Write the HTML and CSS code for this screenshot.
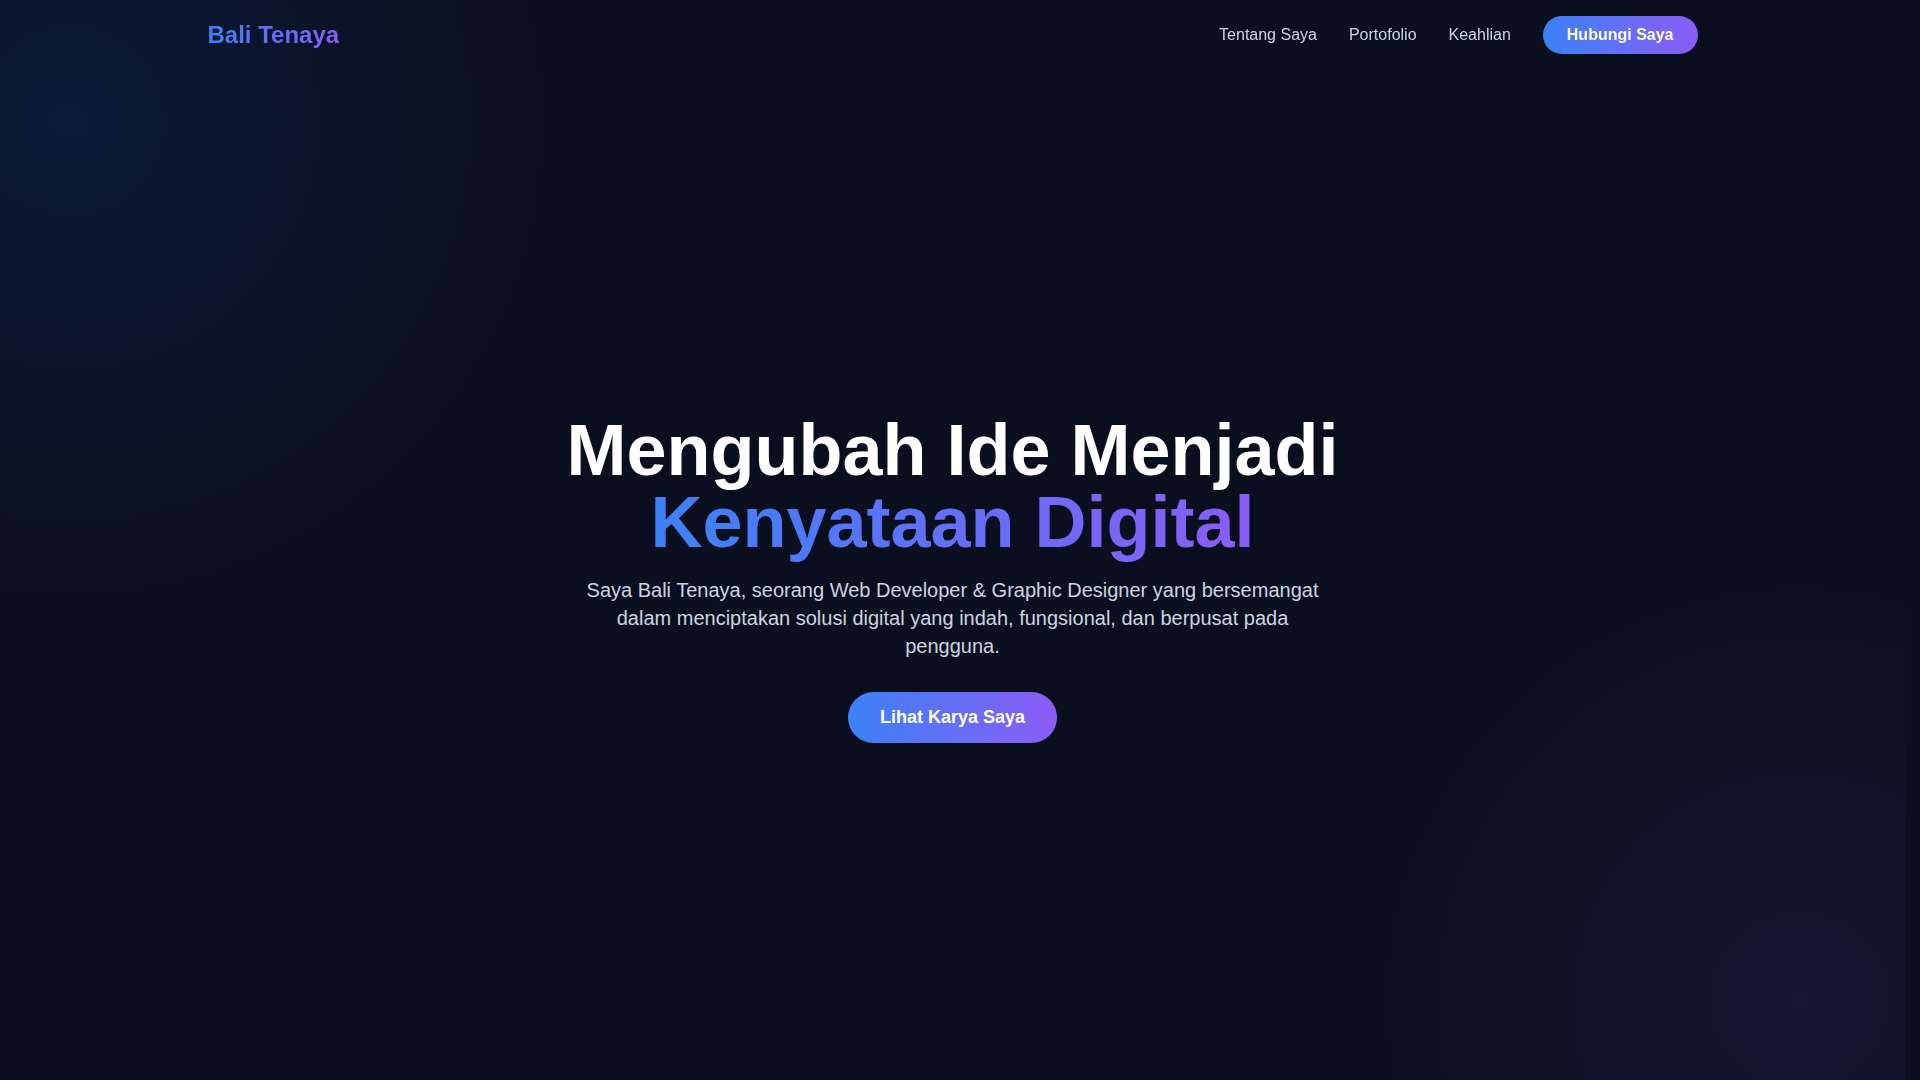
FILE: index.html
```html
<!DOCTYPE html>
<html lang="id">
  <head>
    <meta charset="UTF-8" />
    <meta name="viewport" content="width=device-width, initial-scale=1.0" />
    <title>Bali Tenaya - Web Developer & Graphic Designer</title>
    <link rel="stylesheet" href="styles.css">
  </head>
  <body>
    <!-- Header / Navigation -->
    <header class="header">
      <nav class="nav">
        <a href="#" class="logo">Bali Tenaya</a>
        <div class="nav-links">
          <a href="#tentang">Tentang Saya</a>
          <a href="#portofolio">Portofolio</a>
          <a href="#keahlian">Keahlian</a>
          <a href="#kontak" class="btn btn-nav">Hubungi Saya</a>
        </div>
      </nav>
    </header>

    <!-- Hero Section -->
    <section class="hero">
      <div class="hero-content">
        <h1>
          Mengubah Ide Menjadi<br />
          <span class="gradient-text">Kenyataan Digital</span>
        </h1>
        <p>
          Saya Bali Tenaya, seorang Web Developer &amp; Graphic Designer yang
          bersemangat dalam menciptakan solusi digital yang indah, fungsional,
          dan berpusat pada pengguna.
        </p>
        <a href="#portofolio" class="btn btn-hero">Lihat Karya Saya</a>
      </div>
    </section>

    <!-- About Section -->
    <section class="section" id="tentang">
      <h2>Tentang Saya</h2>
      <p>
        Berbasis di Bali, saya membantu brand dan bisnis tampil lebih baik di
        dunia digital melalui desain yang rapi dan kode yang bersih.
      </p>
    </section>

    <!-- Portfolio Section -->
    <section class="section" id="portofolio">
      <h2>Portofolio</h2>
      <div class="cards">
        <div class="card">Website Company Profile</div>
        <div class="card">Identitas Visual Brand</div>
        <div class="card">Aplikasi Dashboard</div>
      </div>
    </section>

    <!-- Skills Section -->
    <section class="section" id="keahlian">
      <h2>Keahlian</h2>
      <div class="cards">
        <div class="card">HTML, CSS &amp; JavaScript</div>
        <div class="card">UI / UX Design</div>
        <div class="card">Graphic Design</div>
      </div>
    </section>

    <!-- Footer -->
    <footer class="footer" id="kontak">
      © 2024 <strong>Bali Tenaya</strong>. All rights reserved.
    </footer>
  </body>
</html>
```

FILE: styles.css
```css
/* General body styling */
* {
  box-sizing: border-box;
}

body {
  font-family: "Liberation Sans", Arial, sans-serif;
  margin: 0;
  padding: 0 15px 0 0; /* room for the page scrollbar */
  background-color: #0a0f1f;
  color: #cbd5e1;
}

a {
  text-decoration: none;
}

/* Header fixed over the hero */
.header {
  position: fixed;
  top: 0;
  left: 0;
  right: 15px;
  z-index: 10;
}

.nav {
  max-width: 1490px;
  margin: 0 auto;
  padding: 16px 0;
  display: flex;
  justify-content: space-between;
  align-items: center;
}

/* Logo with gradient text */
.logo {
  font-size: 24px;
  font-weight: bold;
  background: linear-gradient(90deg, #3b82f6, #8b5cf6);
  -webkit-background-clip: text;
  background-clip: text;
  color: transparent;
}

.nav-links {
  display: flex;
  align-items: center;
  gap: 32px;
}

.nav-links a {
  color: #cbd5e1;
  font-size: 16px;
}

/* Gradient buttons */
.btn {
  display: inline-block;
  font-weight: bold;
  color: #ffffff;
  border-radius: 50px;
  background: linear-gradient(90deg, #3b82f6, #8b5cf6);
}

.nav-links .btn-nav {
  color: #ffffff;
  padding: 10px 24px;
}

.btn-hero {
  font-size: 18px;
  padding: 15px 32px;
}

/* Hero section with soft glows */
.hero {
  min-height: 100vh;
  padding-top: 76px;
  display: flex;
  justify-content: center;
  align-items: center;
  text-align: center;
  background:
    radial-gradient(circle 480px at 70px 120px, rgba(37, 99, 235, 0.12), transparent),
    radial-gradient(circle 420px at 1800px 1000px, rgba(139, 92, 246, 0.09), transparent);
}

.hero h1 {
  font-size: 72px;
  line-height: 1;
  color: #ffffff;
  margin: 0 0 18px;
}

.gradient-text {
  background: linear-gradient(90deg, #3b82f6, #8b5cf6);
  -webkit-background-clip: text;
  background-clip: text;
  color: transparent;
}

.hero p {
  font-size: 20px;
  line-height: 28px;
  max-width: 750px;
  margin: 0 auto 32px;
  color: #cbd5e1;
}

/* Other sections */
.section {
  max-width: 1200px;
  margin: 0 auto;
  padding: 120px 0;
  min-height: 600px;
}

.section h2 {
  font-size: 40px;
  color: #ffffff;
  margin: 0 0 24px;
  text-align: center;
}

.section p {
  font-size: 18px;
  line-height: 1.6;
  text-align: center;
}

.cards {
  display: grid;
  grid-template-columns: repeat(3, 1fr);
  gap: 24px;
}

.card {
  background: rgba(255, 255, 255, 0.04);
  border: 1px solid rgba(255, 255, 255, 0.08);
  border-radius: 16px;
  padding: 48px 24px;
  text-align: center;
  font-size: 18px;
}

/* Footer styling */
.footer {
  padding: 40px 0;
  text-align: center;
  font-size: 14px;
  color: #64748b;
}

.footer strong {
  color: #8b5cf6;
}
```
